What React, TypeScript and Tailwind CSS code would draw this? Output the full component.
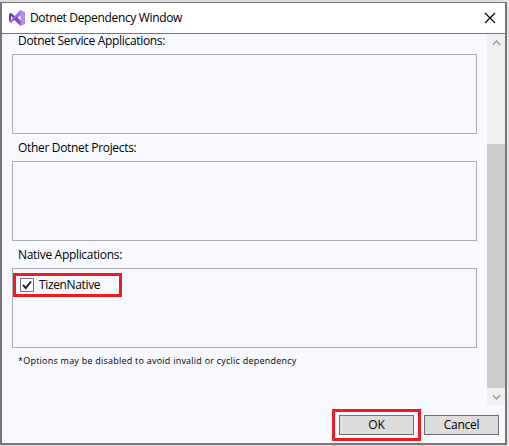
import React from "react";

function Group({ label, children }: { label: string; children?: React.ReactNode }) {
  return (
    <section className="h-[107px] w-[465px]">
      <h2 className="h-[20px] pl-[6px] text-[12px] leading-[14px] tracking-[-0.32px] whitespace-nowrap">{label}</h2>
      <div className="h-[80px] border border-[#abadb3]">{children}</div>
    </section>
  );
}

function Chevron({ up }: { up?: boolean }) {
  return (
    <svg width="17" height="17" viewBox="0 0 17 17" fill="none" stroke="#a3a3a3" strokeWidth="1.7">
      <path d={up ? "M5 11L8.5 7L12 11" : "M5 7L8.5 11L12 7"} />
    </svg>
  );
}

export default function App() {
  return (
    <div className="h-[446px] w-[509px] overflow-hidden bg-linear-to-r from-[#dedede] from-98% to-[#e6e6e6] pt-[2px] font-['Open_Sans','Noto_Sans',sans-serif] text-black">
      <div className="flex h-[443px] w-[507px] flex-col border-2 border-t border-[#77777a] bg-[#f8f9ff]">
        <header className="flex h-[31px] shrink-0 items-center border-b border-[#77777a] bg-white pl-[7px]">
          <svg width="16" height="16" viewBox="0 0 16 16">
            <path d="M0 4L2 3L7.500 7.500L5.500 9.500L2 6V10L0 12Z" fill="#6040a0" />
            <path d="M0 12L11 .5L12 0V5L2 13Z" fill="#9b6bdf" />
            <path d="M5.500 8L7.500 6.500L12 11V16L11 15.500L4.800 9.500Z" fill="#7652b5" />
            <path d="M11.500 0L16 2V14L11.500 16Z" fill="#b78af5" />
          </svg>
          <h1 className="ml-[5px] text-[12px] leading-[16px] tracking-[-0.34px] whitespace-nowrap">Dotnet Dependency Window</h1>
          <svg className="mr-[9px] ml-auto" width="12" height="12" viewBox="0 0 12 12" fill="none" stroke="#000" strokeWidth="1.1">
            <path d="M1 1L11 11M11 1L1 11" />
          </svg>
        </header>
        <div className="flex h-[371px] shrink-0">
          <main className="min-w-0 flex-1 pl-[10px]">
            <Group label="Dotnet Service Applications:" />
            <Group label="Other Dotnet Projects:" />
            <Group label="Native Applications:">
              <div className="mt-[4px] flex h-[24px] w-[109px] items-center border-3 border-[#ed1c24] pl-[4px]">
                <svg width="14" height="14" viewBox="0 0 14 14" fill="none">
                  <path d="M.5 .5H13.500V13.500H.5Z" fill="#fff" stroke="#707070" />
                  <path d="M3 7L5.800 10L11 3.500" stroke="#212121" strokeWidth="2" />
                </svg>
                <span className="ml-[5px] text-[12px] leading-[16px] tracking-[-0.35px]">TizenNative</span>
              </div>
            </Group>
            <p className="pl-[6px] text-[9px] leading-[12px] tracking-[0.23px] whitespace-nowrap">*Options may be disabled to avoid invalid or cyclic dependency</p>
          </main>
          <div className="flex w-[18px] flex-col items-center bg-[#f0f0f0]">
            <Chevron up />
            <div className="mt-[93px] h-[244px] w-full bg-[#cdcdcd]" />
            <Chevron />
          </div>
        </div>
        <footer className="flex h-[36px] shrink-0 items-start justify-end gap-[3px] pt-[4px] pr-[6px]">
          <div className="h-[32px] w-[89px] border-3 border-[#ed1c24] px-[4px] pt-[3px]">
            <button className="block h-[20px] w-[75px] border border-[#707070] bg-[#dddddd] text-[12px] leading-[18px]">OK</button>
          </div>
          <button className="mt-[6px] h-[20px] w-[75px] border border-[#707070] bg-[#dddddd] text-[12px] leading-[18px] tracking-[-0.3px]">Cancel</button>
        </footer>
        <div className="h-[2px] shrink-0 bg-white" />
      </div>
    </div>
  );
}
